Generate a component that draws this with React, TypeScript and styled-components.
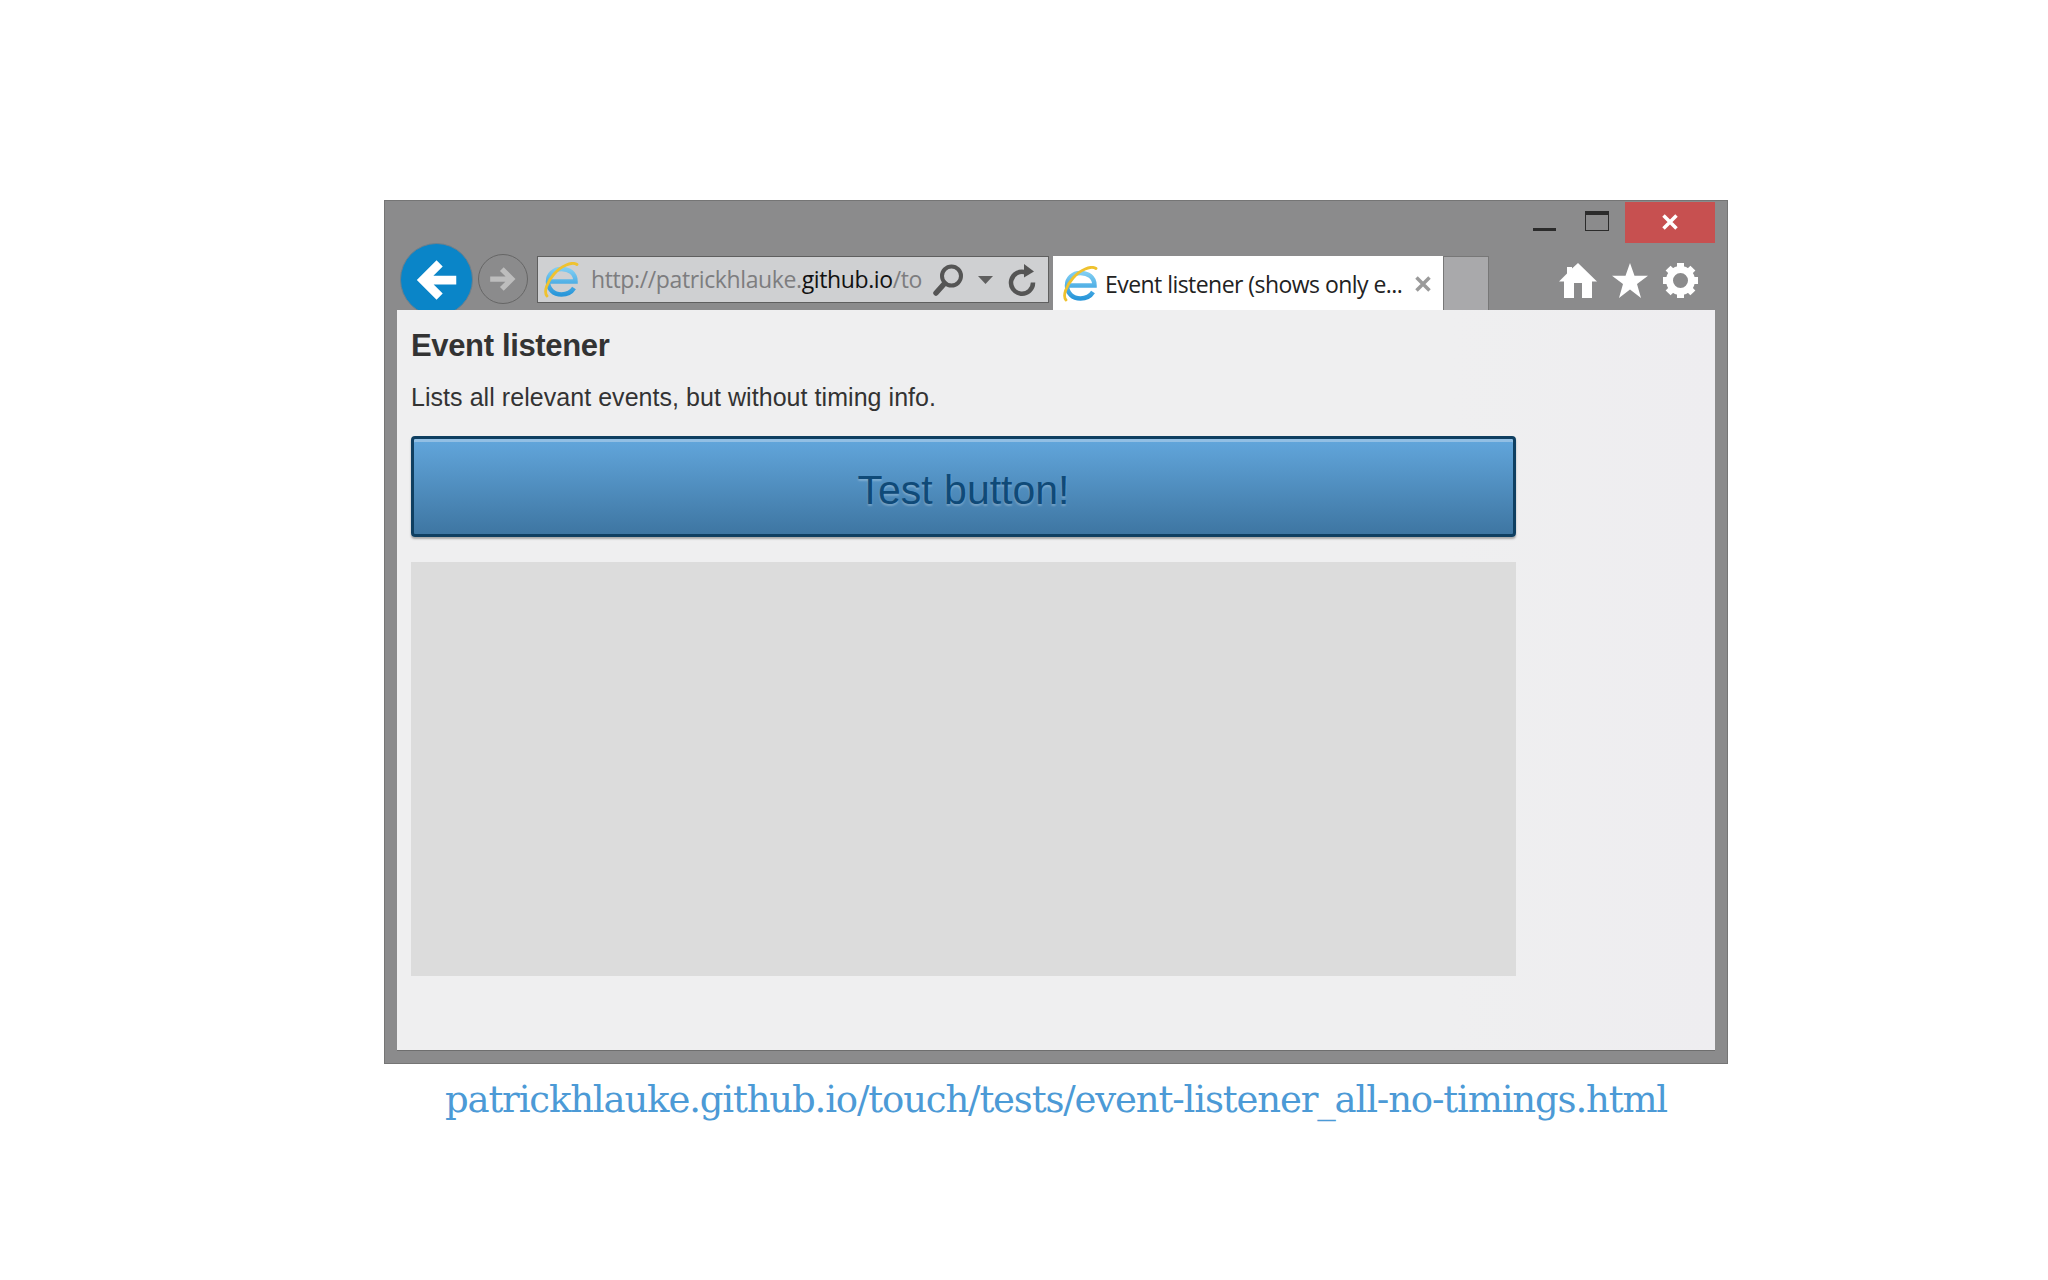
import styled, { createGlobalStyle } from 'styled-components';

const GlobalStyle = createGlobalStyle`
  html, body {
    margin: 0;
    padding: 0;
    background: #fff;
  }
`;

const Page = styled.div`
  width: 2048px;
  height: 1280px;
  padding: 200px 0 0 384px;
  box-sizing: border-box;
`;

const BrowserWindow = styled.div`
  width: 1344px;
  height: 864px;
  box-sizing: border-box;
  background: #8b8b8c;
  border: 1px solid #757575;
  padding: 0 12px 12px;
  display: flex;
  flex-direction: column;
`;

const TitleBar = styled.div`
  height: 42px;
  flex-shrink: 0;
  display: flex;
  justify-content: flex-end;
  align-items: flex-start;
`;

const Minimise = styled.div`
  width: 23px;
  height: 3px;
  background: #2b2b2b;
  margin: 27px 29px 0 0;
`;

const Maximise = styled.div`
  width: 24px;
  height: 20px;
  box-sizing: border-box;
  border: 1px solid #2b2b2b;
  border-top-width: 4px;
  margin: 10px 16px 0 0;
`;

const CloseButton = styled.div`
  width: 90px;
  height: 41px;
  box-sizing: border-box;
  margin-top: 1px;
  padding-bottom: 2px;
  background: #c75050;
  display: flex;
  align-items: center;
  justify-content: center;
`;

const Toolbar = styled.div`
  height: 67px;
  flex-shrink: 0;
  overflow: hidden;
  display: flex;
  align-items: flex-start;
  padding-left: 3px;
`;

const BackButton = styled.div`
  width: 73px;
  height: 73px;
  flex-shrink: 0;
  box-sizing: border-box;
  border-radius: 50%;
  background: #0a85c8;
  border: 1px solid #6f7f8a;
  display: flex;
  align-items: center;
  justify-content: center;
`;

const ForwardButton = styled.div`
  width: 50px;
  height: 50px;
  flex-shrink: 0;
  box-sizing: border-box;
  border-radius: 50%;
  border: 1px solid #666;
  margin: 11px 9px 0 5px;
  display: flex;
  align-items: center;
  justify-content: center;
`;

const AddressBar = styled.div`
  width: 512px;
  height: 47px;
  box-sizing: border-box;
  margin-top: 13px;
  background: #cfd0d2;
  border: 1px solid #5f5f5f;
  display: flex;
  align-items: center;
  padding-left: 5px;
`;

const Url = styled.div`
  width: 333px;
  flex-shrink: 0;
  margin: -2px 0 0 12px;
  overflow: hidden;
  white-space: nowrap;
  font: 23px/30px 'Open Sans', sans-serif;
  letter-spacing: -0.38px;
  color: #7d7d7f;
`;

const UrlHost = styled.span`
  color: #111;
`;

const AddressTool = styled.div<{ $gap: number }>`
  display: flex;
  flex-shrink: 0;
  margin-left: ${props => props.$gap}px;
`;

const TabStrip = styled.div`
  display: flex;
  margin: 13px 0 0 4px;
  height: 54px;
`;

const Tab = styled.div`
  width: 390px;
  box-sizing: border-box;
  background: #fff;
  display: flex;
  align-items: center;
  padding: 2px 0 0 9px;
`;

const TabTitle = styled.div`
  margin-left: 7px;
  width: 310px;
  white-space: nowrap;
  font: 23px/30px 'Open Sans', sans-serif;
  letter-spacing: -0.55px;
  color: #222;
`;

const NewTab = styled.div`
  width: 46px;
  box-sizing: border-box;
  background: #a9a9ab;
  border-top: 1px solid #777;
  border-right: 1px solid #777;
  border-left: 1px solid #777;
`;

const ToolIcons = styled.div`
  display: flex;
  align-items: center;
  gap: 15px;
  margin: 20px 0 0 auto;
  padding-right: 17px;
`;

const Viewport = styled.div`
  height: 741px;
  box-sizing: border-box;
  background: linear-gradient(90deg, #efeff0 0%, #efeff0 80%, #eeedf0 100%);
  border-bottom: 1px solid #6e6e6e;
  padding: 0 13px 0 14px;
`;

const Content = styled.div`
  width: 1105px;
`;

const Heading = styled.h1`
  margin: 0;
  padding-top: 18px;
  font: bold 31px/36px 'Liberation Sans', sans-serif;
  letter-spacing: -0.35px;
  color: #333;
`;

const Intro = styled.p`
  margin: 16px 0 0;
  font: 25px/34px 'Liberation Sans', sans-serif;
  letter-spacing: 0.05px;
  color: #333;
`;

const TestButton = styled.button`
  display: block;
  width: 100%;
  height: 101px;
  margin-top: 22px;
  padding: 7px 0 0;
  box-sizing: border-box;
  border: 3px solid #0f3f61;
  border-radius: 4px;
  background: linear-gradient(#62a6dc, #3e76a2);
  box-shadow: inset 0 3px 0 #92bfe4, 0 2px 2px #a8a8a8;
  font: 41px/46px 'Liberation Sans', sans-serif;
  color: #0f4a78;
  text-shadow: 0 2px 2px rgba(255, 255, 255, 0.25);
`;

const OutputArea = styled.div`
  height: 414px;
  margin-top: 25px;
  background: #dcdcdc;
`;

const Caption = styled.a`
  display: block;
  width: 1344px;
  margin-top: 9px;
  text-align: center;
  font: 37px/54px 'DejaVu Serif', serif;
  letter-spacing: -1.15px;
  color: #4c9ad6;
  white-space: nowrap;
`;

const IeLogo = ({ size }: { size: number }) => (
  <svg width={size} height={size} viewBox="0 0 36 36" fill="none" style={{ flexShrink: 0 }}>
    <defs>
      <linearGradient id="ieBlue" x1="0" y1="0" x2="0" y2="1">
        <stop offset="0" stopColor="#7fcdf2" />
        <stop offset="1" stopColor="#2a97da" />
      </linearGradient>
    </defs>
    <path
      d="M6 19.500H32.500C32.500 11 26 7 18.500 7C10.500 7 5 12.500 5 19.500C5 27 10.500 32.500 18.500 32.500C24.500 32.500 28.500 30 31 26"
      stroke="url(#ieBlue)"
      strokeWidth="4.500"
    />
    <path
      d="M4 34C0.500 30 4 20 11 12C18 4 29 -1 34 2.500"
      stroke="#efc22f"
      strokeWidth="2.800"
      strokeLinecap="round"
    />
  </svg>
);

const CrossIcon = ({ color }: { color: string }) => (
  <svg width="16" height="16" viewBox="0 0 16 16" stroke={color} strokeWidth="3.500">
    <path d="M1.500 1.500l13 13M14.500 1.500l-13 13" />
  </svg>
);

const HomeIcon = () => (
  <svg width="38" height="35" viewBox="0 0 38 35" fill="#fff">
    <path d="M19 0L38 18.500H33V35H23V20H15V35H5V18.500H0L8 10.500V4H13V5.500Z" />
  </svg>
);

const StarIcon = () => (
  <svg width="36" height="35" viewBox="0 0 36 35" fill="#fff">
    <path d="M18 0L22.500 12.800H36L25 21L29 35L18 26.500L7 35L11 21L0 12.800H13.500Z" />
  </svg>
);

const gearTeeth = [0, 45, 90, 135, 180, 225, 270, 315];

const GearIcon = () => (
  <svg width="35" height="35" viewBox="0 0 35 35" fill="#fff">
    <circle cx="17.500" cy="17.500" r="11" fill="none" stroke="#fff" strokeWidth="7" />
    {gearTeeth.map(angle => (
      <rect key={angle} x="14" y="0" width="7" height="7" transform={`rotate(${angle} 17.500 17.500)`} />
    ))}
  </svg>
);

const App = () => (
  <Page>
    <GlobalStyle />
    <BrowserWindow>
      <TitleBar>
        <Minimise />
        <Maximise />
        <CloseButton>
          <CrossIcon color="#fff" />
        </CloseButton>
      </TitleBar>
      <Toolbar>
        <BackButton>
          <svg width="42" height="42" viewBox="0 0 24 24" fill="none" stroke="#fff" strokeWidth="5">
            <path d="M23 12H5M13.500 2.500 4 12l9.500 9.500" />
          </svg>
        </BackButton>
        <ForwardButton>
          <svg width="28" height="28" viewBox="0 0 24 24" fill="none" stroke="#bdbdbd" strokeWidth="4.500">
            <path d="M1 12h18M11 3.500l8.500 8.500-8.500 8.500" />
          </svg>
        </ForwardButton>
        <AddressBar>
          <IeLogo size={36} />
          <Url>
            http://patrickhlauke.<UrlHost>github.io</UrlHost>/to
          </Url>
          <AddressTool $gap={9}>
            <svg width="30" height="32" viewBox="0 0 30 32" fill="none" stroke="#555" strokeWidth="4">
              <circle cx="18.500" cy="12" r="9.500" />
              <path d="M11.500 19.500 3 29" strokeWidth="5.500" strokeLinecap="round" />
            </svg>
          </AddressTool>
          <AddressTool $gap={15}>
            <svg width="15" height="8" viewBox="0 0 15 8" fill="#5f5f5f">
              <path d="M0 0h15L7.500 8z" />
            </svg>
          </AddressTool>
          <AddressTool $gap={14}>
            <svg width="30" height="34" viewBox="0 0 30 34" fill="none" stroke="#555" strokeWidth="4.500">
              <path d="M19 9.500a11 11 0 1 0 7 10" />
              <path d="M17 1l10 7.500-10 6z" fill="#555" stroke="none" />
            </svg>
          </AddressTool>
        </AddressBar>
        <TabStrip>
          <Tab>
            <IeLogo size={36} />
            <TabTitle>Event listener (shows only e...</TabTitle>
            <CrossIcon color="#9a9a9a" />
          </Tab>
          <NewTab />
        </TabStrip>
        <ToolIcons>
          <HomeIcon />
          <StarIcon />
          <GearIcon />
        </ToolIcons>
      </Toolbar>
      <Viewport>
        <Content>
          <Heading>Event listener</Heading>
          <Intro>Lists all relevant events, but without timing info.</Intro>
          <TestButton>Test button!</TestButton>
          <OutputArea />
        </Content>
      </Viewport>
    </BrowserWindow>
    <Caption>patrickhlauke.github.io/touch/tests/event-listener_all-no-timings.html</Caption>
  </Page>
);

export default App;
